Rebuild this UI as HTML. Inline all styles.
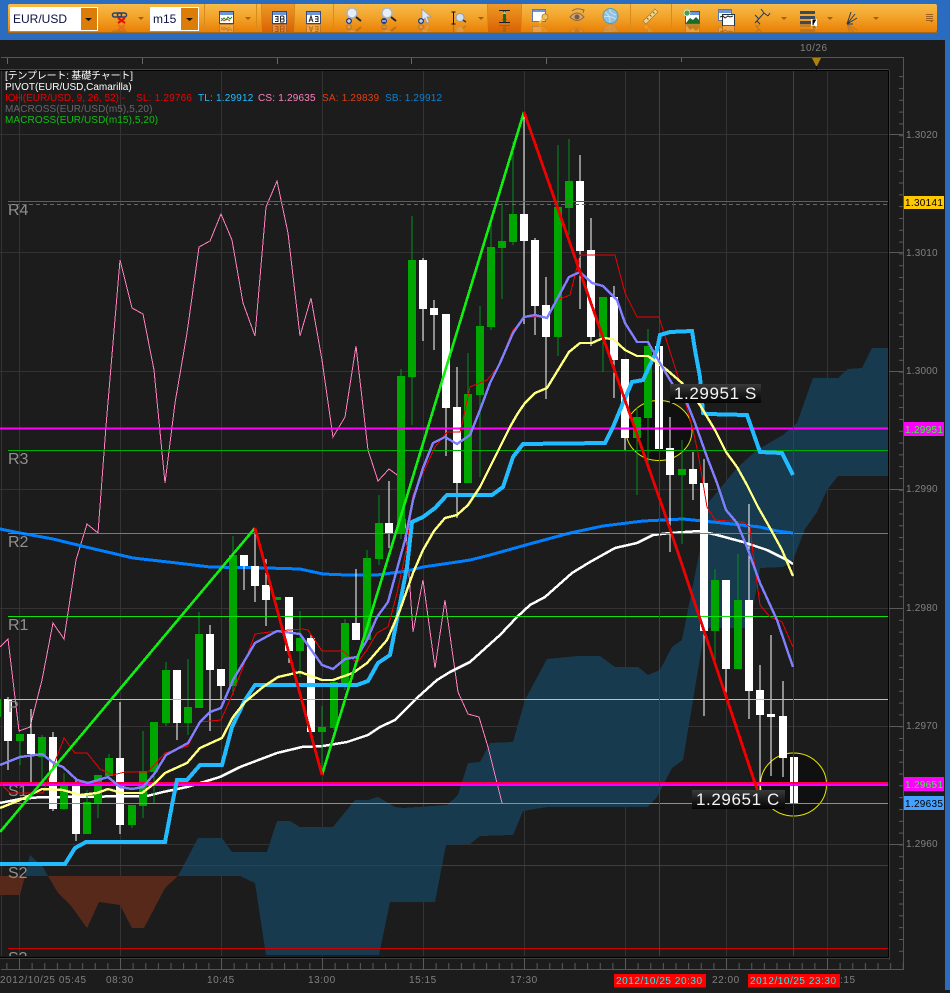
<!DOCTYPE html>
<html lang="ja"><head><meta charset="utf-8"><title>EUR/USD m15</title>
<style>
html,body{margin:0;padding:0;background:#1c1c1c;width:950px;height:993px;overflow:hidden}
svg{display:block;position:absolute;left:0;top:0}
text{font-family:"Liberation Sans","Noto Sans CJK JP",sans-serif}
.l{font-size:10px}
.b{font-size:10px;letter-spacing:.55px;fill:#808080}
.a{font-size:10px;letter-spacing:.2px;fill:#808080}
.n{font-size:16px;fill:#909090}
</style></head><body>
<svg width="950" height="993" viewBox="0 0 950 993" xmlns="http://www.w3.org/2000/svg">
<defs>
<linearGradient id="tb" x1="0" y1="0" x2="0" y2="1"><stop offset="0" stop-color="#f6bb4a"/><stop offset=".5" stop-color="#f2a127"/><stop offset="1" stop-color="#e97f06"/></linearGradient>
<linearGradient id="ac" x1="0" y1="0" x2="0" y2="1"><stop offset="0" stop-color="#ee9a28"/><stop offset="1" stop-color="#da6200"/></linearGradient>
<linearGradient id="lb" x1="0" y1="0" x2="0" y2="1"><stop offset="0" stop-color="#3a3a3a"/><stop offset=".5" stop-color="#1c1c1c"/><stop offset="1" stop-color="#050505"/></linearGradient>
<pattern id="bt" x="6.375" y="963" width="12.625" height="7" patternUnits="userSpaceOnUse"><rect width="1" height="7" fill="#5a5a5a"/></pattern>
<pattern id="rt" x="899" y="5.2" width="4" height="11.82" patternUnits="userSpaceOnUse"><rect width="4" height="1" fill="#5a5a5a"/></pattern>
<clipPath id="pl"><rect x="0" y="71" width="888" height="885"/></clipPath>
<clipPath id="rf"><rect x="100" y="24" width="780" height="8"/></clipPath>
</defs>

<!-- top bar -->
<rect width="950" height="40" fill="#2a6cc0"/>
<rect x="945" width="5" height="990" fill="#2a6cc0"/>
<rect x="8" y="4" width="929" height="28" rx="2" fill="url(#tb)"/>
<rect x="8" y="32" width="929" height="1" fill="#a86a18"/>
<rect x="262" y="4" width="32" height="28" fill="url(#ac)"/>
<rect x="488" y="4" width="33" height="28" fill="url(#ac)"/>
<path d="M204.500 4V32M256.500 4V32M261.500 4V32M294.500 4V32M333.500 4V32M487.500 4V32M521.500 4V32M630.500 4V32M671.500 4V32" stroke="#d98a1c" shape-rendering="crispEdges"/>

<rect x="10" y="7" width="88" height="24" fill="#fff"/>
<rect x="81" y="8" width="16" height="22" fill="#dc7d0a"/>
<path d="M85 18h7l-3.500 3z" fill="#111"/>
<text x="13" y="23" font-size="12" fill="#0a1040">EUR/USD</text>
<rect x="150" y="7" width="49" height="24" fill="#fff"/>
<rect x="181" y="8" width="17" height="22" fill="#dc7d0a"/>
<path d="M186 18h7l-3.500 3z" fill="#111"/>
<svg x="150" y="7" width="31" height="24"><text x="3" y="16" font-size="12" fill="#0a1040">m15</text></svg>

<!-- carets -->
<path d="M138 17h6l-3 3zM245 17h6l-3 3zM478 17h6l-3 3zM781 17h6l-3 3zM827 17h6l-3 3zM873 17h6l-3 3z" fill="#a0601a"/>

<g id="ics">
<!-- link / x icon -->
<g fill="none" stroke-width="1.500"><rect x="112.500" y="13" width="9" height="4" rx="2" stroke="#26436e"/><rect x="117.500" y="13" width="9" height="4" rx="2" stroke="#26436e"/><path d="M118 18l7 5M125 18l-7 5" stroke="#e01010" stroke-width="2"/></g>
<!-- chart window -->
<rect x="219.500" y="11.500" width="14" height="12" fill="#fff" stroke="#304a80"/><rect x="220" y="12" width="13" height="3" fill="#6c96d8"/><path d="M221 21l3-3 2 2 2-3 2 2 2-2" fill="none" stroke="#1a8a1a"/><path d="M221 18l3 3 3-2 3 2" fill="none" stroke="#d03020" stroke-width=".8"/>
<!-- EB -->
<rect x="272.500" y="11.500" width="14" height="12" fill="#fff" stroke="#304a80"/><rect x="273" y="12" width="13" height="3" fill="#6c96d8"/><path d="M275 16.500h3v5h-3M275.500 19h2.500M280.500 16v6h2.500a1 1 0 0 0 1-1.500a1 1 0 0 0-1-1.500h-2.500M280.500 19h2a1 1 0 0 0 0-3h-2" fill="none" stroke="#222"/>
<!-- AE -->
<rect x="306.500" y="11.500" width="14" height="12" fill="#fff" stroke="#304a80"/><rect x="307" y="12" width="13" height="3" fill="#6c96d8"/><path d="M309 22l2-6 2 6M309.800 20h2.500M315 16.500h3M318 16.500v5h-3M318 19h-3" fill="none" stroke="#222"/>
<!-- magnifiers -->
<circle cx="352" cy="13" r="5" fill="#e8eef6" stroke="#aab4c4" stroke-width="1.500"/><path d="M356 17l5 4" stroke="#223" stroke-width="2"/><circle cx="349" cy="21" r="3" fill="#1c3e8c"/><path d="M347 21h4M349 19v4" stroke="#fff"/>
<circle cx="387" cy="13" r="5" fill="#e8eef6" stroke="#aab4c4" stroke-width="1.500"/><path d="M391 17l5 4" stroke="#223" stroke-width="2"/><circle cx="384" cy="21" r="3" fill="#1c3e8c"/><path d="M382 21h4" stroke="#fff"/>
<path d="M422 9v12l3-3 2 5 2-1-2-5h4z" fill="#dfe6f0" stroke="#8d98a8" stroke-width=".7"/><circle cx="421" cy="21" r="3" fill="#1c3e8c"/><path d="M419 21h4M421 19v4" stroke="#fff"/>
<path d="M451.500 12h4M453.500 12v12M451.500 24h4" stroke="#111" fill="none"/><circle cx="460" cy="17.500" r="4" fill="#cfe0ef" stroke="#8aa0b8"/><path d="M463 20l3 2" stroke="#334" stroke-width="1.500"/>
<!-- green I active -->
<path d="M499 10.500h11M499 22.500h11" stroke="#1a2030"/><path d="M504.500 11v11" stroke="#156a20" stroke-width="3"/><path d="M502 14l2.500-3 2.500 3z" fill="#9ad27a"/><path d="M502 19l2.500 3 2.500-3z" fill="#156a20"/>
<!-- window key -->
<rect x="532.500" y="9.500" width="13" height="12" fill="#fff" stroke="#5a78b0"/><rect x="533" y="10" width="12" height="2" fill="#6c96d8"/><circle cx="545" cy="17" r="3" fill="#f0c25a" stroke="#b8862a"/><path d="M543 19l-4 4" stroke="#f0c25a" stroke-width="2"/>
<!-- eye -->
<path d="M570 17q7-8 14 0q-7 7-14 0z" fill="#d0a878" stroke="#8a6a4a"/><circle cx="577" cy="17" r="2.500" fill="#7a5a3a"/><path d="M572 11q5-4 11-1M580 9l4 1-1 3" fill="none" stroke="#8a6a4a"/>
<!-- globe -->
<circle cx="610.500" cy="16" r="7.500" fill="#8ec2e0" stroke="#5f94b8"/><path d="M605 12q5 3 5 10M610 9q-1 4 6 6M604 17q5-2 12 2" stroke="#c8e4f2" fill="none"/>
<!-- ruler -->
<path d="M643 21l12-12 3 3-12 12z" fill="#f0d48a" stroke="#9a7a3a" stroke-width=".7"/><path d="M647 18l1.500 1.500M650 15l1.500 1.500M653 12l1.500 1.500" stroke="#7a5a2a"/>
<!-- image plus -->
<rect x="685.500" y="11.500" width="14" height="12" fill="#fff" stroke="#3a5a94"/><rect x="686" y="12" width="13" height="3" fill="#6c96d8"/><path d="M686 23l4-5 3 2 3-3 3 3v3z" fill="#1a6a2a"/><circle cx="687" cy="13" r="3" fill="#4aa048" stroke="#dff" stroke-width=".7"/>
<!-- windows -->
<rect x="718.500" y="9.500" width="13" height="11" fill="#fff" stroke="#5a78b0"/><rect x="719" y="10" width="12" height="3" fill="#6c96d8"/><rect x="722.500" y="14.500" width="12" height="11" fill="#fff" stroke="#234"/><path d="M720 17l3-1 2 2 3-2 2 1 3-1" fill="none" stroke="#222"/>
<!-- fork -->
<path d="M755 23l9-10 4 3M759 19l-4-4M764 13l-3-4M768 16l2-3M757 21l3 3" fill="none" stroke="#213a5c" stroke-width="1"/>
<!-- list F -->
<g fill="#3a4a5a"><rect x="800" y="11" width="15" height="3"/><rect x="800" y="16" width="15" height="3"/><rect x="800" y="21" width="15" height="3"/></g><rect x="811" y="19" width="6" height="7" fill="#fff"/><path d="M813 25v-5h3M813 22h2" stroke="#000"/>
<!-- fan -->
<path d="M847 24l4-12M847 24l8-10M847 24l10-6M847 24h6" stroke="#213a5c" fill="none"/>
</g>
<g clip-path="url(#rf)" opacity=".22"><use href="#ics" transform="translate(0,48) scale(1,-1)"/></g>
<!-- menu -->
<path d="M926 14.500h7M926 16.500h7M926 18.500h7M926 20.500h7" stroke="#a0601a"/><path d="M929 20h5l-2.500 2.500z" fill="#a0601a"/>

<!-- chart frame -->
<text x="800" y="51" font-size="10" letter-spacing=".5" fill="#808080">10/26</text>
<g shape-rendering="crispEdges">
<rect x="1" y="57" width="902" height="1" fill="#555"/>
<rect x="0" y="69" width="889" height="1" fill="#444"/>
<rect x="0" y="70" width="889" height="1" fill="#000"/>
<rect x="903" y="57" width="1" height="913" fill="#555"/>
<rect x="1" y="969" width="903" height="1" fill="#555"/>
<rect x="888" y="70" width="1" height="888" fill="#000"/>
<rect x="889" y="70" width="1" height="890" fill="#3c3c3c"/>
<rect x="0" y="957" width="889" height="1" fill="#000"/>
<rect x="0" y="958" width="889" height="1" fill="#3c3c3c"/>
<path d="M7.500 58v6M142.500 58v6M277.500 58v6M411.500 58v6M546.500 58v6M681.500 58v4" stroke="#666"/>
<rect x="899" y="71" width="4" height="887" fill="url(#rt)"/>
<rect x="0" y="963" width="903" height="6" fill="url(#bt)"/>
<path d="M889 134.500h14M889 252.500h14M889 371.500h14M889 489.500h14M889 608.500h14M889 726.500h14M889 844.500h14" stroke="#5a5a5a"/>
<path d="M19.500 958v11M120.500 958v11M221.500 958v11M322.500 958v11M423.500 958v11M524.500 958v11M625.500 958v11M726.500 958v11M827.500 958v11" stroke="#5a5a5a"/>
</g>
<path d="M812 58h9l-4.500 9z" fill="#ad8010"/><path d="M816.500 66v6" stroke="#111" shape-rendering="crispEdges"/>

<!-- plot -->
<g clip-path="url(#pl)">
<g shape-rendering="crispEdges">
<path d="M1.500 71V956M19.500 71V956M120.500 71V956M221.500 71V956M322.500 71V956M423.500 71V956M524.500 71V956M625.500 71V956M726.500 71V956M827.500 71V956M0 134.500H888M0 252.500H888M0 371.500H888M0 489.500H888M0 608.500H888M0 726.500H888M0 844.500H888" stroke="#333" fill="none"/>
<!-- cloud -->
<path d="M0 876H25L20 895H0zM48 876L58 893 72 907 87 928 99 902 120 905 132 928 144 928 165 888 178 876z" fill="#56291a"/>
<path d="M25 876L30 855 43 867 48 876zM178 876L198 838 222 838 232 852 267 852 277 821 290 821 300 827 333 827 355 800 368 800 378 797 395 807 403 808 447 805 458 795 468 763 480 762 490 743 513 742 525 700 547 659 578 656 600 656 615 667 638 667 648 675 660 670 672 647 682 640 690 600 700 550 708 503 737 468 757 450 783 435 797 423 813 378 838 378 848 369 862 368 872 348 888 348V476H838L827 490 817 512 805 529 793 560 783 567 760 568 753 608 750 628H705L693 700 683 760 672 768 657 797 648 807 547 807 523 811 513 835 480 836 470 844 446 845 435 902 390 902 379 955H266L255 883 240 876z" fill="#173a4e"/>
</g>
<ellipse cx="659" cy="430.500" rx="33" ry="30" fill="#101010" stroke="#e6e600"/>
<ellipse cx="793.500" cy="784.500" rx="33" ry="31.500" fill="#101010" stroke="#e6e600"/>
<!-- pink -->
<polyline shape-rendering="crispEdges" fill="none" stroke="#ff80c0" points="0,647 8,639 19,731 30,727 42,680 53,623 64,639 76,560 87,524 98,533 106,426 120,260 132,308 143,314 154,370 165,483 175,403 187,333 199,247 210,241 221,214 232,240 243,303 255,336 266,207 277,181 288,233 300,336 311,298 322,360 333,437 345,417 356,346 368,450 378,481 389,469 400,477 406,530 413,632 423,580 435,668 445,600 458,692 468,714 479,717 488,747 502,803"/>
<!-- slow MAs under candles -->
<polyline shape-rendering="crispEdges" fill="none" stroke="#0080ff" stroke-width="3" points="0,529 20,533 53,539 90,548 133,558 177,563 210,567 267,568 300,569 323,574 347,575 377,575 407,571 423,567 457,562 470,560 490,555 533,543 570,533 603,526 643,521 683,519 713,522 760,527 777,531 793,533"/>
<polyline shape-rendering="crispEdges" fill="none" stroke="#fff" stroke-width="2.500" points="0,803 20,799 42,797 63,797 147,796 163,792 187,787 220,777 240,767 277,753 302,747 323,746 347,742 368,735 380,727 395,720 407,708 417,698 437,680 450,672 470,662 500,635 517,617 530,605 545,597 572,573 590,562 615,548 637,543 653,535 670,533 700,531 717,535 743,542 767,550 787,560 793,564"/>
<!-- candles -->
<g shape-rendering="crispEdges" fill="none">
<path stroke="#00901a" stroke-width="1" d="M20 734V765M42 735V783M64 773V810M87 790V834M98 775V818M109 754V780M132 805V828M143 731V818M154 722V803M166 662V726M188 659V735M199 612V708M233 536V695M300 611V677M322 706V775M334 680V730M345 619V690M367 550V640M379 495V565M401 369V539M412 216V425M468 353V483M480 306V477M491 223V330M502 203V299M513 142V245M558 145V356M569 139V235M603 297V372M637 407V495M648 329V463M682 440V544M715 569V663M738 554V669"/>
<path stroke="#fff" stroke-width="1" d="M8 697V770M31 709V783M53 732V811M76 780V841M120 702V834M177 670V740M210 625V731M221 669V700M244 555V590M255 528V602M266 559V626M289 597V663M311 635V732M356 569V640M389 481V548M423 258V341M434 300V350M446 314V456M457 367V518M524 112V324M535 238V335M546 277V399M580 155V309M591 218V346M614 286V398M625 359V450M670 417V552M693 452V500M704 459V716M726 580V697M749 504V719M760 665V790M771 635V776M783 681V777M794 757V803"/>
<path stroke="#00a600" stroke-width="8" d="M-3 699V717M20 734V741M42 737V757M64 785V809M87 802V834M98 775V803M109 758V776M132 805V825M143 771V806M154 722V772M166 670V723M188 707V723M199 634V708M233 555V686M277 597V600M300 638V651M322 727V732M334 682V728M345 623V683M367 558V640M379 523V559M401 376V533M412 260V377M468 394V483M480 326V395M491 247V327M502 241V248M513 214V242M558 207V337M569 181V208M603 297V337M637 417V438M648 346V418M682 469V475M715 580V631M738 600V669"/>
<path stroke="#fff" stroke-width="8" d="M8 699V741M31 734V754M53 737V809M76 783V834M120 758V825M177 670V723M210 634V670M221 669V686M244 555V566M255 566V586M266 585V600M289 597V651M311 638V732M356 623V640M389 523V533M423 260V309M434 308V315M446 314V408M457 407V483M524 214V241M535 240V306M546 305V337M580 181V251M591 250V337M614 297V360M625 359V438M659 346V449M670 448V475M693 469V484M704 483V631M726 580V669M749 600V691M760 690V715M771 714V717M783 716V758M794 757V803"/>
</g>
<!-- level labels -->
<g><text class="n" x="8" y="215">R4</text><text class="n" x="8" y="464">R3</text><text class="n" x="8" y="547">R2</text><text class="n" x="8" y="630">R1</text><text class="n" x="8" y="712">P</text><text class="n" x="8" y="796">S1</text><text class="n" x="8" y="878">S2</text><text class="n" x="8" y="963">S3</text></g>
<!-- level lines -->
<g shape-rendering="crispEdges" fill="none">
<path d="M8 201.500H888" stroke="#1f8a1f"/>
<path d="M8 204.500H888" stroke="#666" stroke-dasharray="4 3"/>
<path d="M0 428.500H888" stroke="#ff00ff" stroke-width="2"/>
<path d="M8 450.500H888" stroke="#00b000"/>
<path d="M8 533.500H888" stroke="#22b822"/>
<path d="M8 616.500H888" stroke="#10e010"/>
<path d="M8 699.500H888" stroke="#c0c0c0"/>
<path d="M0 783H888" stroke="#ff0040" stroke-width="2"/>
<path d="M0 785H888" stroke="#ff00ff" stroke-width="2"/>
<path d="M8 803.500H888" stroke="#4d9ee8"/>
<path d="M8 865.500H888" stroke="#a81010"/>
<path d="M8 948.500H888" stroke="#cc0000"/>
<path d="M659.500 71V956M793.500 71V956" stroke="#d80000"/>
</g>
<!-- fast lines -->
<g shape-rendering="crispEdges" fill="none">
<polyline stroke="#ee0000" points="0,783 10,793 43,793 64,738 75,753 87,753 100,769 113,775 125,772 148,772 165,753 188,746 200,722 221,720 233,693 243,667 255,634 277,631 302,629 308,630 322,651 343,651 357,663 367,650 377,633 388,627 397,593 407,547 413,495 423,473 435,447 447,432 460,432 463,420 470,387 487,380 498,367 513,330 525,317 547,317 557,300 570,295 580,255 615,255 625,293 637,317 659,317 680,383 693,430 698,453 707,507 715,520 743,522 750,527 753,553 760,605 770,617 782,622 793,647"/>
<polyline stroke="#22bbff" stroke-width="4" points="0,864 65,864 75,848 86,842 165,842 173,800 177,780 187,780 200,765 222,765 232,727 245,700 255,685 357,685 368,681 378,663 390,655 393,640 402,593 407,567 412,522 423,517 435,508 447,495 492,495 503,487 513,457 523,444 605,443 613,427 623,403 632,382 643,380 657,350 660,335 670,332 692,331 695,350 700,377 703,413 707,414 747,415 760,452 782,453 793,475"/>
<polyline stroke="#ffff80" stroke-width="2.400" points="0,808 20,800 42,789 63,790 80,795 97,793 108,789 122,793 142,793 155,783 165,773 187,763 200,748 222,738 233,717 245,702 263,687 278,677 300,672 322,680 333,680 353,673 367,663 387,640 400,610 413,573 423,550 434,531 445,518 457,515 468,505 480,487 490,467 500,447 510,427 518,413 525,403 535,393 547,388 558,370 569,352 580,343 592,343 603,338 613,339 625,350 637,356 648,356 667,370 682,383 700,405 715,430 726,452 737,467 747,485 758,507 770,528 782,550 793,576"/>
<polyline stroke="#8080ff" stroke-width="2.400" points="0,765 20,757 42,754 55,764 63,767 77,780 88,783 108,777 120,787 132,789 143,787 155,773 166,755 188,743 200,722 210,712 221,708 233,680 245,660 255,643 277,631 300,634 322,665 333,669 345,659 357,657 367,640 377,617 388,602 405,540 413,500 423,468 433,443 445,437 457,444 470,435 480,410 490,383 500,363 513,333 524,317 535,315 547,318 569,277 580,272 592,283 603,286 617,300 625,323 637,342 648,342 660,363 673,385 687,403 695,423 707,457 717,483 726,510 737,523 747,547 760,583 777,620 793,667"/>
<polyline stroke="#10f010" stroke-width="2.600" points="0,832 255,528"/>
<polyline stroke="#10f010" stroke-width="2.600" points="322,775 524,112"/>
<polyline stroke="#f00000" stroke-width="2.800" points="255,528 322,775"/>
<polyline stroke="#f00000" stroke-width="2.800" points="524,112 667,520 759,795"/>
</g>
<!-- callouts -->
<rect x="670" y="384" width="91" height="19" fill="url(#lb)"/>
<text x="674" y="399" font-size="17" letter-spacing=".6" fill="#f4f4f4">1.29951 S</text>
<rect x="692" y="790" width="93" height="19" fill="url(#lb)"/>
<text x="696" y="805" font-size="17" letter-spacing=".6" fill="#f4f4f4">1.29651 C</text>
</g>

<!-- legend -->
<text class="l" x="5" y="79" fill="#fff" textLength="128">[テンプレート: 基礎チャート]</text>
<text class="l" x="5" y="90" fill="#fff">PIVOT(EUR/USD,Camarilla)</text>
<text class="l" x="5" y="101" fill="#f00000">IOH(EUR/USD, 9, 26, 52) -</text>
<text class="l" x="136" y="101" fill="#f00000" letter-spacing=".2">SL: 1.29766</text>
<text class="l" x="198" y="101" fill="#22bbff" letter-spacing=".2">TL: 1.29912</text>
<text class="l" x="258" y="101" fill="#ff80c0" letter-spacing=".2">CS: 1.29635</text>
<text class="l" x="322" y="101" fill="#e04010" letter-spacing=".2">SA: 1.29839</text>
<text class="l" x="385" y="101" fill="#0a80d0" letter-spacing=".2">SB: 1.29912</text>
<text class="l" x="5" y="112" fill="#666" letter-spacing=".1">MACROSS(EUR/USD(m5),5,20)</text>
<text class="l" x="5" y="123" fill="#10c010" letter-spacing=".1">MACROSS(EUR/USD(m15),5,20)</text>

<!-- right axis -->
<text class="a" x="906" y="138">1.3020</text>
<text class="a" x="906" y="256">1.3010</text>
<text class="a" x="906" y="374">1.3000</text>
<text class="a" x="906" y="492">1.2990</text>
<text class="a" x="906" y="611">1.2980</text>
<text class="a" x="906" y="729">1.2970</text>
<text class="a" x="906" y="847">1.2960</text>
<g shape-rendering="crispEdges">
<rect x="904" y="196" width="40" height="13" fill="#ffc800"/>
<rect x="904" y="422" width="40" height="14" fill="#ff00ff"/>
<rect x="904" y="777" width="40" height="14" fill="#ff00ff"/>
<rect x="904" y="796" width="40" height="14" fill="#46a0ff"/>
</g>
<text x="905" y="206" font-size="10" letter-spacing=".3" fill="#000">1.30141</text>
<text x="905" y="433" font-size="10" letter-spacing=".3" fill="#30ff30">1.29951</text>
<text x="905" y="788" font-size="10" letter-spacing=".3" fill="#30ff30">1.29651</text>
<text x="905" y="807" font-size="10" letter-spacing=".3" fill="#000">1.29635</text>

<!-- bottom axis -->
<text class="b" x="0" y="983">2012/10/25 05:45</text>
<text class="b" x="106" y="983">08:30</text>
<text class="b" x="207" y="983">10:45</text>
<text class="b" x="308" y="983">13:00</text>
<text class="b" x="409" y="983">15:15</text>
<text class="b" x="510" y="983">17:30</text>
<text class="b" x="712" y="983">22:00</text>
<text class="b" x="840" y="983">:15</text>
<rect x="614" y="974" width="92" height="13.500" fill="#ff0000" shape-rendering="crispEdges"/>
<text x="616" y="984" font-size="10" letter-spacing=".55" fill="#00ffff">2012/10/25 20:30</text>
<rect x="748" y="974" width="92" height="13.500" fill="#ff0000" shape-rendering="crispEdges"/>
<text x="750" y="984" font-size="10" letter-spacing=".55" fill="#00ffff">2012/10/25 23:30</text>
</svg>
</body></html>
